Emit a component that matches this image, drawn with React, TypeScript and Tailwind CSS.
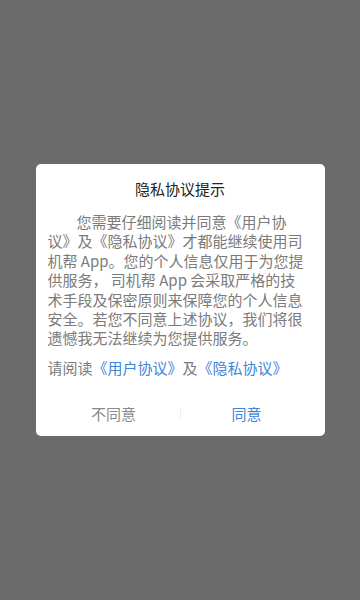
const lines = [
  "您需要仔细阅读并同意《用户协",
  "议》及《隐私协议》才都能继续使用司",
  "机帮 App。您的个人信息仅用于为您提",
  "供服务， 司机帮 App 会采取严格的技",
  "术手段及保密原则来保障您的个人信息",
  "安全。若您不同意上述协议，我们将很",
  "遗憾我无法继续为您提供服务。",
];

export default function App() {
  return (
    <main
      className="w-[360px] h-[600px] bg-[#6b6b6b] flex items-center justify-center"
      style={{ fontFamily: '"Noto Sans CJK SC", "Liberation Sans", sans-serif' }}
    >
      <div className="w-[289px] h-[272px] bg-white rounded-[5px] flex flex-col px-3 pt-[15px]">
        <h1 className="text-center text-[15px] leading-[20px] text-[#222]">隐私协议提示</h1>
        <div className="mt-[13px] text-[15px] leading-[19.4px] text-[#7b7b7b] [text-spacing-trim:space-all]">
          {lines.map((l, i) => (
            <div key={i} className={i === 0 ? "pl-[29px] whitespace-nowrap" : "whitespace-nowrap"}>
              {l}
            </div>
          ))}
        </div>
        <p className="mt-[10px] text-[15px] leading-[20px] text-[#7b7b7b] whitespace-nowrap [text-spacing-trim:space-all]">
          请阅读<span className="text-[#3d86d9]">《用户协议》</span>及<span className="text-[#3d86d9]">《隐私协议》</span>
        </p>
        <div className="mt-auto mb-[12px] flex items-center">
          <button className="flex-1 text-[15px] leading-[20px] text-[#8a8a8a]">不同意</button>
          <div className="w-px h-[12px] bg-[#eeeeee]" />
          <button className="flex-1 text-[15px] leading-[20px] text-[#3d86d9]">同意</button>
        </div>
      </div>
    </main>
  );
}
